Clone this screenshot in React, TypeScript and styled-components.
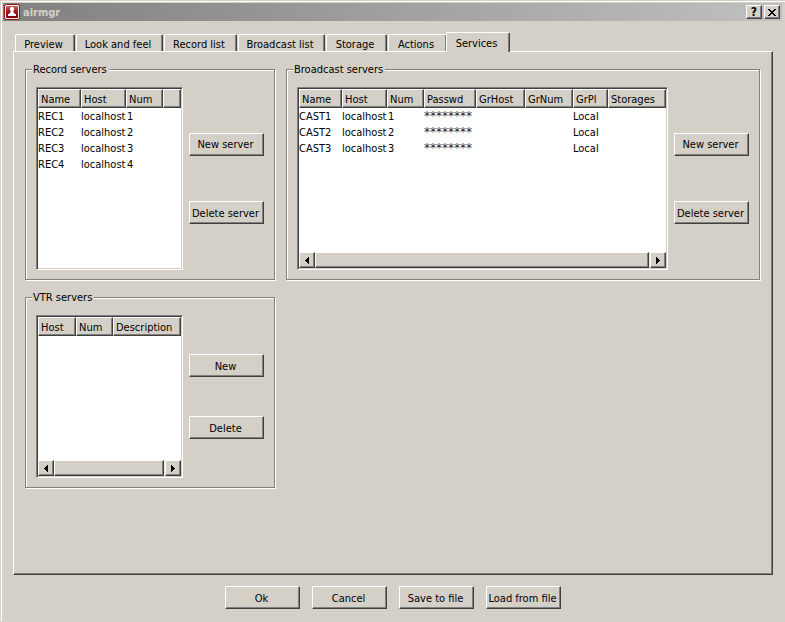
import React, { useState } from "react";
import styled, { createGlobalStyle, css } from "styled-components";

const face = "#d4d0c8";
const light = "#ffffff";
const shadow = "#808080";
const dark = "#404040";

const raised = css`
  border: 1px solid;
  border-color: ${light} ${dark} ${dark} ${light};
  box-shadow: inset -1px -1px 0 ${shadow};
`;

const GlobalStyle = createGlobalStyle`
  *, *::before, *::after { box-sizing: border-box; }
  body {
    margin: 0;
    background: ${face};
    color: #000;
    font: 11px/13px "DejaVu Sans Condensed", "DejaVu Sans", sans-serif;
  }
  button { font: inherit; color: inherit; }
`;

const Window = styled.div`
  display: flex;
  flex-direction: column;
  min-height: 100vh;
  padding: 1px;
  border: 1px solid ${face};
  border-right: 0;
  box-shadow: inset 1px 1px 0 ${light};
`;

const TitleBar = styled.header`
  display: flex;
  align-items: center;
  gap: 2px;
  height: 18px;
  margin: 1px 2px 0 1px;
  padding: 0 2px 0 1px;
  background: linear-gradient(to right, #808080, #c0c0c0);
`;

const Title = styled.h1`
  flex: 1;
  margin: 0;
  padding: 1px 0 0 1px;
  color: ${face};
  font-size: 11px;
  line-height: 16px;
`;

const CaptionButton = styled.button`
  display: flex;
  align-items: center;
  justify-content: center;
  width: 16px;
  height: 14px;
  padding: 0;
  background: ${face};
  font-size: 12px;
  line-height: 12px;
  font-weight: bold;
  ${raised}
`;

const TabList = styled.div`
  display: flex;
  align-items: flex-end;
  gap: 1px;
  height: 30px;
  padding-left: 13px;
`;

const Tab = styled.button<{ $width: number }>`
  flex: 0 0 ${(p) => p.$width}px;
  height: 17px;
  padding: 2px 3px 0 0;
  border: solid;
  border-width: 1px 1px 0 1px;
  border-color: ${light} ${dark} ${light} ${light};
  border-radius: 2px 2px 0 0;
  background: ${face};
  box-shadow: inset -1px 0 0 ${shadow};
  white-space: nowrap;

  &[aria-selected="true"] {
    z-index: 1;
    height: 20px;
    margin: 0 -2px -1px -2px;
    padding-bottom: 1px;
  }
`;

const Pane = styled.main`
  flex: 1;
  display: grid;
  grid-template-columns: 250px minmax(0, 1fr);
  align-content: start;
  gap: 11px;
  margin: 0 11px 0 11px;
  padding: 11px 12px 11px 11px;
  ${raised}
`;

const Group = styled.fieldset`
  min-width: 0;
  margin: 0;
  padding: 11px 10px 9px;
  border: 1px solid ${shadow};
  box-shadow: 1px 1px 0 ${light}, inset 1px 1px 0 ${light};
`;

const Legend = styled.legend`
  margin-left: -4px;
  padding: 0 2px 0 1px;
  background: ${face};
`;

const GroupBody = styled.div`
  display: flex;
  gap: 6px;
`;

const ListBox = styled.div<{ $height: number }>`
  flex: 1;
  display: flex;
  flex-direction: column;
  justify-content: space-between;
  min-width: 0;
  min-height: ${(p) => p.$height}px;
  overflow: hidden;
  border: 1px solid;
  border-color: ${shadow} ${light} ${light} ${shadow};
  background: #fff;
  box-shadow: inset 1px 1px 0 ${dark}, inset -1px -1px 0 ${face};
  padding: 1px;
`;

const Table = styled.table`
  width: 100%;
  table-layout: fixed;
  border-collapse: separate;
  border-spacing: 0;
`;

const HeadCell = styled.th<{ $width?: number }>`
  width: ${(p) => (p.$width ? `${p.$width}px` : "auto")};
  height: 19px;
  padding: 2px 0 0 2px;
  overflow: hidden;
  background: ${face};
  font-weight: normal;
  text-align: left;
  white-space: nowrap;
  ${raised}
`;

const Cell = styled.td<{ $numeric?: boolean }>`
  height: 16px;
  padding: 0 0 0 ${(p) => (p.$numeric ? 1 : 0)}px;
  white-space: nowrap;
`;

const Masked = styled.span`
  color: #00305c;
  font-family: "DejaVu Sans", sans-serif;
  font-size: 12px;
  line-height: 13px;
`;

const Side = styled.div`
  display: flex;
  flex-direction: column;
  justify-content: space-evenly;
`;

const PushButton = styled.button`
  width: 75px;
  height: 23px;
  padding: 1px 2px 0 0;
  background: ${face};
  white-space: nowrap;
  ${raised}
`;

const ScrollTrack = styled.div`
  display: flex;
  height: 16px;
  background: repeating-conic-gradient(${light} 0 25%, ${face} 0 50%) 0 0 / 2px 2px;
`;

const ScrollButton = styled.button`
  display: flex;
  align-items: center;
  justify-content: center;
  width: 16px;
  padding: 0;
  background: ${face};
  ${raised}
`;

const ScrollThumb = styled.div`
  flex: 1;
  margin-right: 1px;
  background: ${face};
  ${raised}
`;

const Footer = styled.footer`
  display: flex;
  justify-content: center;
  gap: 12px;
  padding: 11px 0;
`;

type Column = { label: string; width?: number; masked?: boolean; numeric?: boolean };

const baseColumns: Column[] = [
  { label: "Name", width: 43 },
  { label: "Host", width: 45 },
  { label: "Num", width: 37, numeric: true },
];

const broadcastColumns: Column[] = [
  ...baseColumns,
  { label: "Passwd", width: 52, masked: true },
  { label: "GrHost", width: 49 },
  { label: "GrNum", width: 48 },
  { label: "GrPl", width: 35 },
  { label: "Storages" },
];

const vtrColumns: Column[] = [
  { label: "Host", width: 38 },
  { label: "Num", width: 37 },
  { label: "Description" },
];

const recordRows = [1, 2, 3, 4].map((n) => [`REC${n}`, "localhost", `${n}`, ""]);
const broadcastRows = [1, 2, 3].map((n) => [
  `CAST${n}`, "localhost", `${n}`, "********", "", "", "Local", "",
]);

const tabs = [
  { label: "Preview", width: 60 },
  { label: "Look and feel", width: 87 },
  { label: "Record list", width: 73 },
  { label: "Broadcast list", width: 87 },
  { label: "Storage", width: 61 },
  { label: "Actions", width: 59 },
  { label: "Services", width: 64 },
];

function AppIcon() {
  return (
    <svg width="16" height="16" viewBox="0 0 16 16" aria-hidden="true">
      <defs>
        <linearGradient id="badge" x1="0" y1="0" x2="0" y2="1">
          <stop offset="0" stopColor="#c86464" />
          <stop offset="0.45" stopColor="#a01c20" />
          <stop offset="1" stopColor="#780408" />
        </linearGradient>
      </defs>
      <rect x="0.5" y="0.5" width="15" height="15" rx="2" fill="#f4e8e6" stroke="#8c1418" />
      <rect x="2" y="2" width="12" height="12" rx="1" fill="url(#badge)" />
      <path d="M6 4l1-1h2l1 1v2L9 7.500l2 2.500h1v2H4v-2h1l2-2.500L6 6z" fill="#fff" />
    </svg>
  );
}

function ScrollBar() {
  return (
    <ScrollTrack>
      <ScrollButton aria-label="Scroll left">
        <svg width="4" height="7" viewBox="0 0 4 7" shapeRendering="crispEdges">
          <path d="M4 0v7L0 3.5z" />
        </svg>
      </ScrollButton>
      <ScrollThumb />
      <ScrollButton aria-label="Scroll right">
        <svg width="4" height="7" viewBox="0 0 4 7" shapeRendering="crispEdges">
          <path d="M0 0v7l4-3.5z" />
        </svg>
      </ScrollButton>
    </ScrollTrack>
  );
}

type ServerGroupProps = {
  title: string;
  columns: Column[];
  rows: string[][];
  height: number;
  actions: string[];
  scroll?: boolean;
};

function ServerGroup({ title, columns, rows, height, actions, scroll }: ServerGroupProps) {
  return (
    <Group>
      <Legend>{title}</Legend>
      <GroupBody>
        <ListBox $height={height}>
          <Table aria-label={title}>
            <thead>
              <tr>
                {columns.map((c, i) => (
                  <HeadCell key={i} $width={c.width}>{c.label}</HeadCell>
                ))}
              </tr>
            </thead>
            <tbody>
              {rows.map((row) => (
                <tr key={row[0]}>
                  {row.map((value, i) => (
                    <Cell key={i} $numeric={columns[i].numeric}>
                      {columns[i].masked ? <Masked>{value}</Masked> : value}
                    </Cell>
                  ))}
                </tr>
              ))}
            </tbody>
          </Table>
          {scroll && <ScrollBar />}
        </ListBox>
        <Side>
          {actions.map((a) => (
            <PushButton key={a}>{a}</PushButton>
          ))}
        </Side>
      </GroupBody>
    </Group>
  );
}

export default function App() {
  const [active, setActive] = useState("Services");
  return (
    <>
      <GlobalStyle />
      <Window>
        <TitleBar>
          <AppIcon />
          <Title>airmgr</Title>
          <CaptionButton aria-label="Help">?</CaptionButton>
          <CaptionButton aria-label="Close">
            <svg width="8" height="7" viewBox="0 0 8 7" shapeRendering="crispEdges">
              <path d="M0 0h2v1h1v1h2V1h1V0h2v1H7v1H6v1H5v1h1v1h1v1h1v1H6V6H5V5H3v1H2v1H0V6h1V5h1V4h1V3H2V2H1V1H0z" />
            </svg>
          </CaptionButton>
        </TitleBar>
        <TabList role="tablist">
          {tabs.map((t) => (
            <Tab
              key={t.label}
              role="tab"
              $width={t.width}
              aria-selected={t.label === active}
              onClick={() => setActive(t.label)}
            >
              {t.label}
            </Tab>
          ))}
        </TabList>
        <Pane>
          <ServerGroup
            title="Record servers"
            columns={[...baseColumns, { label: "" }]}
            rows={recordRows}
            height={183}
            actions={["New server", "Delete server"]}
          />
          <ServerGroup
            title="Broadcast servers"
            columns={broadcastColumns}
            rows={broadcastRows}
            height={183}
            actions={["New server", "Delete server"]}
            scroll
          />
          <ServerGroup
            title="VTR servers"
            columns={vtrColumns}
            rows={[]}
            height={163}
            actions={["New", "Delete"]}
            scroll
          />
        </Pane>
        <Footer>
          {["Ok", "Cancel", "Save to file", "Load from file"].map((label) => (
            <PushButton key={label}>{label}</PushButton>
          ))}
        </Footer>
      </Window>
    </>
  );
}
